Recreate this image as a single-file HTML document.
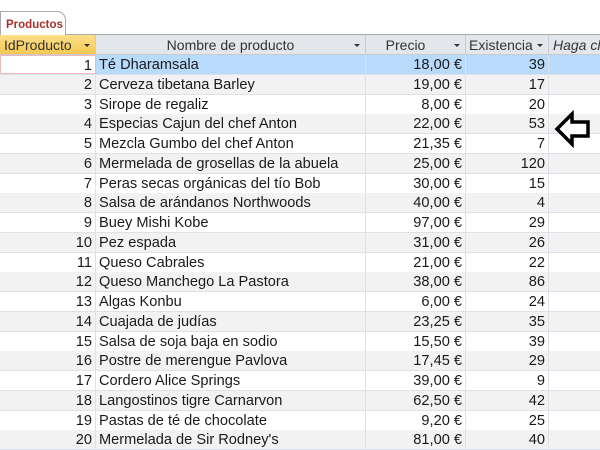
<!DOCTYPE html>
<html><head><meta charset="utf-8"><style>
body{margin:0;width:600px;height:449px;overflow:hidden;background:#fff;font-family:"Liberation Sans",sans-serif;font-size:14.6px;color:#1a1a1a;position:relative}
.tab{position:absolute;left:0;top:11px;width:66px;height:24px;border:1px solid #a9a9a9;border-bottom:none;border-radius:0 9px 0 0;background:#fff;color:#a8302a;font-weight:bold;font-size:11.5px;line-height:26px;padding-left:5px;box-sizing:border-box}
.hl{position:absolute;left:66px;top:34px;width:534px;border-top:1px solid #a9a9a9}
.hdr{position:absolute;top:35px;height:20px;line-height:20px;background:#e3e6ea;border-right:1px solid #c6ccd4;border-bottom:1px solid #c6ccd4;box-sizing:border-box;color:#333;font-size:14px;white-space:nowrap;overflow:hidden}
.dd{position:absolute;right:5px;top:9px;border-left:3px solid transparent;border-right:3px solid transparent;border-top:3px solid #333}
.row{position:absolute;left:0;width:600px;height:20px;line-height:20px;border-bottom:1px solid #dde2ea;box-sizing:border-box}
.c{position:absolute;top:0;height:100%;border-right:1px solid #dde2ea;box-sizing:border-box;white-space:nowrap;overflow:hidden}
.r{text-align:right;padding-right:3px}
</style></head><body>
<div class="tab">Productos</div><div class="hl"></div>
<div class="hdr" style="left:0;width:96px;background:linear-gradient(#fbe08a,#f6c851);padding-left:4px">IdProducto<span class="dd"></span></div>
<div class="hdr" style="left:96px;width:270px;text-align:center">Nombre de producto<span class="dd"></span></div>
<div class="hdr" style="left:366px;width:100px;text-align:center;padding-right:20px">Precio<span class="dd"></span></div>
<div class="hdr" style="left:466px;width:83px;padding-left:3px">Existencia<span class="dd" style="background:#e3e6ea;box-shadow:0 0 0 4px #e3e6ea"></span></div>
<div class="hdr" style="left:549px;width:51px;padding-left:4px;font-style:italic;border-right:none">Haga clic</div>
<div id="rows"></div>
<svg style="position:absolute;left:554px;top:110px" width="38" height="38" viewBox="0 0 38 38"><path d="M3 19 L18 4 L18 12 L34 12 L34 26 L18 26 L18 34 Z" fill="#fff" stroke="#000" stroke-width="3.5" stroke-linejoin="miter"/></svg>
<script>
var d=[["Té Dharamsala","18,00 €",39],["Cerveza tibetana Barley","19,00 €",17],["Sirope de regaliz","8,00 €",20],["Especias Cajun del chef Anton","22,00 €",53],["Mezcla Gumbo del chef Anton","21,35 €",7],["Mermelada de grosellas de la abuela","25,00 €",120],["Peras secas orgánicas del tío Bob","30,00 €",15],["Salsa de arándanos Northwoods","40,00 €",4],["Buey Mishi Kobe","97,00 €",29],["Pez espada","31,00 €",26],["Queso Cabrales","21,00 €",22],["Queso Manchego La Pastora","38,00 €",86],["Algas Konbu","6,00 €",24],["Cuajada de judías","23,25 €",35],["Salsa de soja baja en sodio","15,50 €",39],["Postre de merengue Pavlova","17,45 €",29],["Cordero Alice Springs","39,00 €",9],["Langostinos tigre Carnarvon","62,50 €",42],["Pastas de té de chocolate","9,20 €",25],["Mermelada de Sir Rodney's","81,00 €",40]];
var h="";d.forEach(function(x,i){var bg=i==0?"#b9dbfb":(i%2?"#f2f2f2":"#fff");
h+='<div class="row" style="top:'+(55+i*19.75)+'px;background:'+bg+'">'+
'<div class="c r" style="left:0;width:96px;background:'+(i==0?"#fff;border:1px solid #f0b8b8":"transparent")+'">'+(i+1)+'</div>'+
'<div class="c" style="left:96px;width:270px;padding-left:3px">'+x[0]+'</div>'+
'<div class="c r" style="left:366px;width:100px">'+x[1]+'</div>'+
'<div class="c r" style="left:466px;width:83px">'+x[2]+'</div></div>';});
document.getElementById("rows").innerHTML=h;
</script>
</body></html>
